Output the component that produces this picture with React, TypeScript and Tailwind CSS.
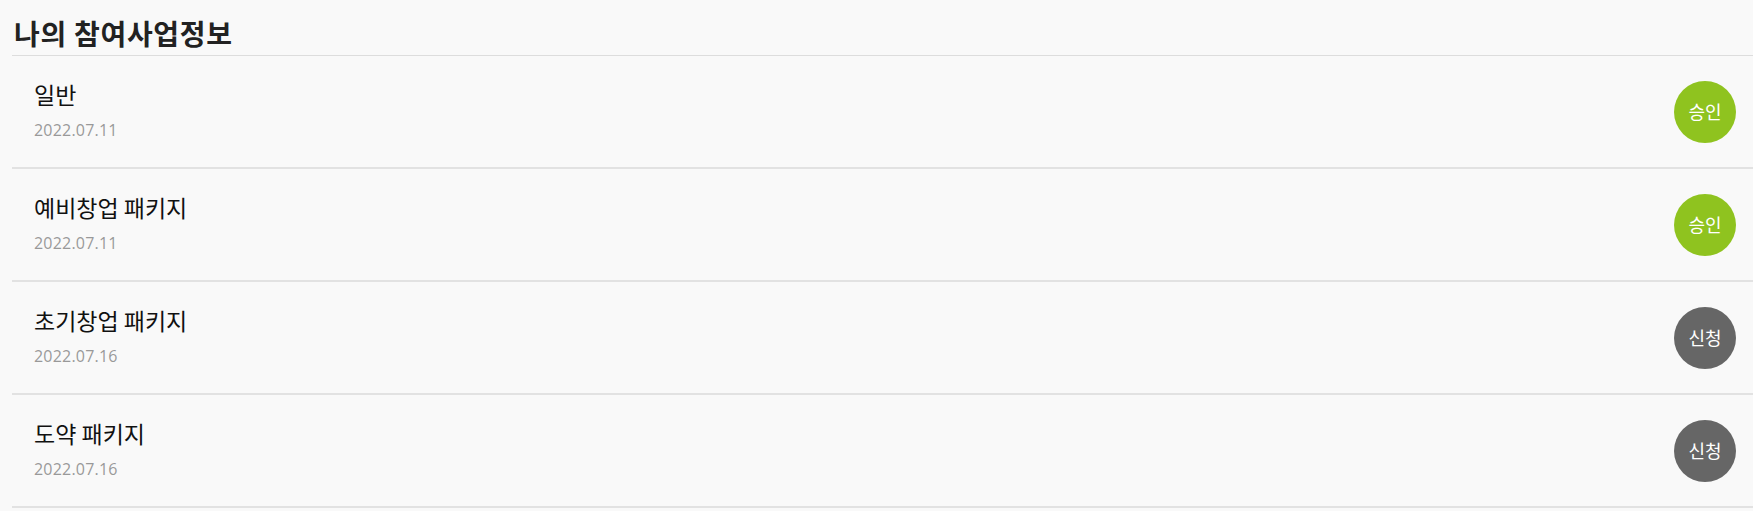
const items = [
  { name: "일반", date: "2022.07.11", status: "승인" },
  { name: "예비창업 패키지", date: "2022.07.11", status: "승인" },
  { name: "초기창업 패키지", date: "2022.07.16", status: "신청" },
  { name: "도약 패키지", date: "2022.07.16", status: "신청" },
];

export default function App() {
  return (
    <div
      className="min-h-screen bg-[#f9f9f9] pl-[12px]"
      style={{ fontFamily: '"Noto Sans CJK KR", "Noto Sans", sans-serif' }}
    >
      <h2 className="pt-[15px] pb-[4px] pl-[2px] text-[28px] leading-[36px] tracking-[0.7px] font-bold text-[#222] border-b border-[#dddddd]">
        나의 참여사업정보
      </h2>
      <ul>
        {items.map((item) => (
          <li
            key={item.name}
            className="flex h-[113px] items-center justify-between border-b-2 border-[#e2e2e2] pl-[22px] pr-[17px]"
          >
            <div className="mb-[5px] flex flex-col">
              <span className="text-[23px] leading-[30px] text-[#111]">{item.name}</span>
              <span
                className="mt-[11px] text-[16px] leading-[20px] tracking-[0.2px] text-[#999]"
                style={{ fontFamily: '"Open Sans", "Noto Sans CJK KR", sans-serif' }}
              >
                {item.date}
              </span>
            </div>
            <div
              className={
                "flex h-[62px] w-[62px] items-center justify-center rounded-full text-[18px] text-white " +
                (item.status === "승인" ? "bg-[#8fc31f]" : "bg-[#666666]")
              }
            >
              {item.status}
            </div>
          </li>
        ))}
      </ul>
    </div>
  );
}
